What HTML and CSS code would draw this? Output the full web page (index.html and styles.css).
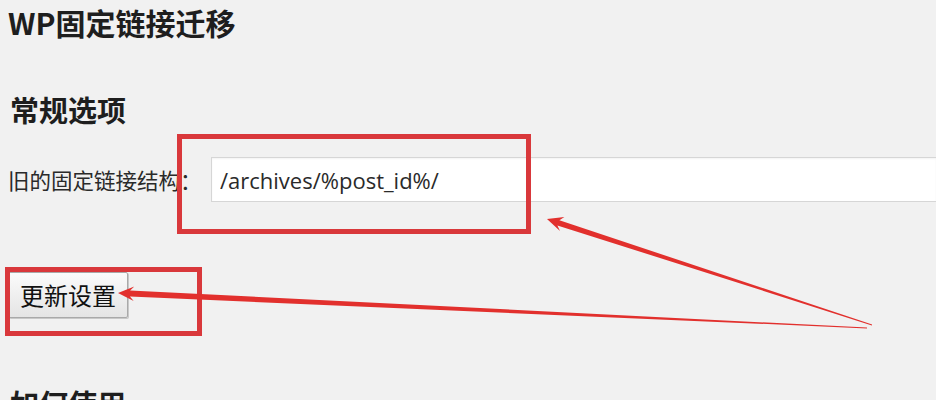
FILE: index.html
```html
<!DOCTYPE html>
<html lang="zh-CN">
<head>
<meta charset="utf-8">
<title>WP固定链接迁移</title>
<link rel="stylesheet" href="styles.css">
</head>
<body>
<div class="page">
  <h1 class="title">WP固定链接迁移</h1>
  <h2 class="section">常规选项</h2>
  <div class="field-row">
    <label class="field-label" for="old">旧的固定链接结构：</label>
    <input class="field-input" id="old" type="text" value="/archives/%post_id%/">
  </div>
  <div class="actions">
    <button class="btn" type="button">更新设置</button>
  </div>
  <h2 class="section section-next">如何使用</h2>
</div>
<svg class="annotations" width="936" height="400" viewBox="0 0 936 400" xmlns="http://www.w3.org/2000/svg">
  <rect x="179.5" y="136.5" width="349" height="95" fill="none" stroke="#d9383b" stroke-width="5"/>
  <rect x="7.5" y="269.5" width="192" height="64" fill="none" stroke="#d9383b" stroke-width="5"/>
  <polygon fill="#e2302d" points="547,219 564.4,217 559.4,220.2 872.1,324.6 871.9,325.4 557.4,225.4 560,231"/>
  <polygon fill="#e2302d" points="118,293 134.3,286.5 130.1,290.4 867,327.6 867,328.4 129.9,296.6 133.7,301"/>
</svg>
</body>
</html>
```
FILE: styles.css
```css
html, body {
  margin: 0;
  padding: 0;
  overflow: hidden;
}

body {
  background: #f1f1f1;
  color: #222;
  font-family: "Noto Sans CJK SC", "Noto Sans", sans-serif;
  position: relative;
  width: 936px;
  height: 400px;
}

.page {
  padding: 4px 0 0 8px;
}

.title {
  margin: 0;
  font-size: 30px;
  line-height: 36px;
  font-weight: 700;
  color: #1e1e1e;
}

.section {
  margin: 51px 0 0 2px;
  font-size: 29px;
  line-height: 36px;
  font-weight: 700;
  color: #1e1e1e;
}

.section-next {
  margin-top: 67px;
}

.field-row {
  display: flex;
  align-items: center;
  margin-top: 30px;
}

.field-label {
  flex: 0 0 203px;
  font-size: 21.5px;
  line-height: 30px;
  color: #2a2a2a;
  white-space: nowrap;
}

.field-input {
  flex: 1 1 auto;
  min-width: 0;
  height: 45px;
  box-sizing: border-box;
  border: 1px solid #d6d6d6;
  border-right: none;
  background: #fff;
  padding: 0 0 0 8px;
  margin: 0;
  font-family: "Open Sans", "Noto Sans", sans-serif;
  font-size: 22px;
  color: #2a2a2a;
  box-shadow: inset 0 1px 2px rgba(0, 0, 0, 0.05);
}

.actions {
  margin-top: 70px;
}

.btn {
  display: block;
  height: 46px;
  padding: 0 11px;
  margin: 0;
  border: 1px solid #a9a9a9;
  border-radius: 2px;
  background: linear-gradient(#fbfbfb, #e4e4e4);
  box-shadow: 1px 1px 0 #c8c8c8;
  font-family: "Noto Sans CJK SC", sans-serif;
  font-size: 24px;
  line-height: 44px;
  color: #111;
}

.annotations {
  position: absolute;
  left: 0;
  top: 0;
  pointer-events: none;
}
```
